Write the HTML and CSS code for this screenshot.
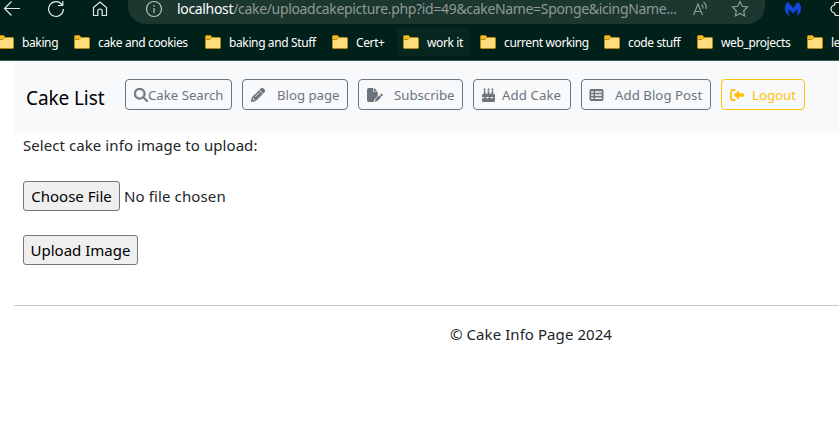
FILE: index.html
```html
<!DOCTYPE html>
<html lang="en">
<head>
<meta charset="utf-8">
<title>Cake Info</title>
<link rel="stylesheet" href="styles.css">
</head>
<body>
<svg class="defs" width="0" height="0">
  <symbol id="folder" viewBox="0 0 16 14">
    <path d="M.5 1.5q0-1 1-1h4l1.5 2h7.500q1 0 1 1v9q0 1-1 1h-13q-1 0-1-1z" fill="#ffdc7c" stroke="#b58a12"/>
    <path d="M1 1h4.500l1 1.500-1.500 1.500h-4z" fill="#f4bd1c"/>
    <path d="M1 4.500h4l2-2" fill="none" stroke="#b58a12"/>
  </symbol>
</svg>
<header class="browser">
  <div class="toolbar">
    <svg class="back" width="18" height="18" viewBox="0 0 18 18"><path d="M17 8.500H1.500M8.500 1.500l-7 7 7 7"/></svg>
    <svg class="reload" width="18" height="18" viewBox="0 0 18 18"><path d="M15.200 5A7.400 7.400 0 1 0 16.400 9M15.800 1v4.500H11"/></svg>
    <svg class="home" width="16" height="18" viewBox="0 0 16 18"><path d="M1.500 7.500L8 2l6.500 5.500V15.500h-4.300v-4.300a2.200 2.200 0 0 0-4.400 0v4.300H1.500z"/></svg>
    <div class="address">
      <svg class="info" width="18" height="18" viewBox="0 0 18 18"><circle cx="9" cy="9" r="7.500"/><path d="M9 8v5M9 5v1.500"/></svg>
      <span class="url"><b>localhost</b>/cake/uploadcakepicture.php?id=49&amp;cakeName=Sponge&amp;icingName...</span>
      <svg class="read" width="17" height="18" viewBox="0 0 17 18"><path d="M1.500 15L6 4l4.500 11M3 11.500h6M9.500 4.500q2 1.500 1.500 4M11.500 2q3.500 3 2.500 7"/></svg>
      <svg class="star" width="18" height="18" viewBox="0 0 18 18"><path d="M9 1.500l2.300 4.800 5.200.700-3.800 3.700.9 5.300L9 13.500 4.400 16l.9-5.300L1.500 7l5.200-.7z"/></svg>
    </div>
    <svg class="malware" width="18" height="16" viewBox="0 0 18 16"><path d="M4 1l5 6 5-6q3.500 3 2.900 7.500Q16.500 13 12.500 15q1.500-3 1-7L9 12.500 4.500 8q-.5 4 1 7Q1.500 13 1.100 8.500.5 4 4 1z"/></svg>
    <svg class="puzzle" width="9" height="18" viewBox="0 0 9 18"><path d="M9 2.500H6.500Q4.500 2.500 4.500 5 1 6 1 9t3.500 4q0 2.500 2 2.500H9"/></svg>
  </div>
  <nav class="bookmarks">
    <a class="mark m1"><svg><use href="#folder"/></svg><span>baking</span></a>
    <a class="mark m2"><svg><use href="#folder"/></svg><span>cake and cookies</span></a>
    <a class="mark m3"><svg><use href="#folder"/></svg><span>baking and Stuff</span></a>
    <a class="mark m4"><svg><use href="#folder"/></svg><span>Cert+</span></a>
    <a class="mark m5"><svg><use href="#folder"/></svg><span>work it</span></a>
    <a class="mark m6"><svg><use href="#folder"/></svg><span>current working</span></a>
    <a class="mark m7"><svg><use href="#folder"/></svg><span>code stuff</span></a>
    <a class="mark m8"><svg><use href="#folder"/></svg><span>web_projects</span></a>
    <a class="mark m9"><svg><use href="#folder"/></svg><span>le</span></a>
  </nav>
</header>
<div class="page">
  <nav class="navbar">
    <a class="brand">Cake List</a>
    <a class="btn search"><svg width="14" height="14" viewBox="0 0 512 512"><path stroke="currentColor" stroke-width="16" d="M416 208c0 45.900-14.900 88.300-40 122.700L502.600 457.400c12.500 12.500 12.500 32.800 0 45.300s-32.800 12.500-45.300 0L330.700 376c-34.400 25.200-76.800 40-122.700 40C93.100 416 0 322.900 0 208S93.100 0 208 0S416 93.100 416 208zM208 352a144 144 0 1 0 0-288 144 144 0 1 0 0 288z"/></svg><span>Cake Search</span></a>
    <a class="btn blog"><svg width="14" height="14" viewBox="0 0 512 512"><path stroke="currentColor" stroke-width="14" d="M410.300 231l11.300-11.300-33.900-33.900-62.100-62.100L291.700 89.800l-11.300 11.300-22.600 22.600L58.600 322.900c-10.400 10.400-18 23.300-22.200 37.400L1 480.700c-2.500 8.400-.2 17.500 6.100 23.700s15.300 8.500 23.700 6.100l120.300-35.400c14.100-4.200 27-11.800 37.400-22.200L387.700 253.700 410.300 231zM160 399.400l-9.100 22.700c-4 3.100-8.500 5.400-13.300 6.900L59.400 452l23-78.100c1.400-4.900 3.800-9.400 6.900-13.300l22.700-9.100v32c0 8.800 7.200 16 16 16h32zM362.700 18.700L348.300 33.200 325.700 55.800 314.300 67.100l33.900 33.900 62.100 62.100 33.900 33.900 11.300-11.300 22.600-22.600 14.500-14.500c25-25 25-65.500 0-90.500L453.300 18.700c-25-25-65.500-25-90.500 0zm-47.400 168l-144 144c-6.200 6.200-16.400 6.200-22.600 0s-6.200-16.400 0-22.600l144-144c6.200-6.200 16.400-6.200 22.600 0s6.200 16.400 0 22.600z"/></svg><span>Blog page</span></a>
    <a class="btn subscribe"><svg width="16" height="14" viewBox="0 0 16 14"><path d="M1.700 0H6.300v3.200q0 .9.900.9h3.600v3.900L7.500 11.200 6.700 14H1.700Q0 14 0 12.300V1.700Q0 0 1.700 0zM7 0l3.800 3.500H7zM13.700 5.900q.6-.6 1.200 0l.7.700q.6.600 0 1.200l-.8.800-1.900-1.900zM12.300 7.300l1.900 1.900-3.800 3.800-2.600.8.700-2.700z"/></svg><span>Subscribe</span></a>
    <a class="btn cake"><svg width="13" height="14" viewBox="0 0 13 14"><path d="M2.600 0q1 1.100 1 1.700a1 1 0 0 1-2 0q0-.6 1-1.700zM6.500 0q1 1.100 1 1.700a1 1 0 0 1-2 0q0-.6 1-1.700zM10.400 0q1 1.100 1 1.700a1 1 0 0 1-2 0q0-.6 1-1.700zM1.700 3.200h1.800v2.600h2.100V3.200h1.800v2.600h2.100V3.200h1.800v2.600q1.800.2 1.800 1.800v1.500l-1.200.6-2.100-1-2.100 1-2.200-1-2.100 1L0 9.100V7.600Q0 5.900 1.700 5.800zM0 10l1.100.5 2.200-1 2.100 1 2.200-1 2.100 1 2.100-1 1.200.5V13q0 1-1 1H1q-1 0-1-1z"/></svg><span>Add Cake</span></a>
    <a class="btn post"><svg width="15" height="14" viewBox="0 0 14 14"><path fill-rule="evenodd" d="M1.700 1h10.600Q14 1 14 2.700v8.600q0 1.700-1.700 1.700H1.700Q0 13 0 11.300V2.700Q0 1 1.700 1zM1.700 3.200v1.500h2.300V3.200zM5.500 3.200v1.500h6.800V3.200zM1.700 6.300v1.500h2.300V6.300zM5.500 6.300v1.500h6.800V6.300zM1.700 9.500v1.500h2.300V9.500zM5.500 9.500v1.500h6.800V9.500z"/></svg><span>Add Blog Post</span></a>
    <a class="btn logout"><svg width="14" height="14" viewBox="0 0 14 14"><path d="M4.500 2H3Q1 2 1 4v6q0 2 2 2h1.500" fill="none" stroke="currentColor" stroke-width="1.800" stroke-linecap="round"/><path d="M4.200 6.500l4-3.800q.8-.5.800.4v2.100h4q1 0 1 .9v1.800q0 .9-1 .9H9v2.100q0 .9-.8.4l-4-3.800q-.5-.5 0-1z"/></svg><span>Logout</span></a>
  </nav>
  <main class="upload">
    <p class="prompt">Select cake info image to upload:</p>
    <div class="file"><button class="control choose">Choose File</button><span class="status">No file chosen</span></div>
    <button class="control submit">Upload Image</button>
  </main>
  <footer class="footer">© Cake Info Page 2024</footer>
</div>
</body>
</html>
```
FILE: styles.css
```css
* { box-sizing: border-box; }
body {
  margin: 0;
  height: 434px;
  overflow: hidden;
  background: #fff;
  color: #212529;
  font-family: "Noto Sans", sans-serif;
  font-size: 15px;
}
svg { flex: none; display: block; }
.defs { position: absolute; }
.browser {
  height: 61px;
  background: #02201a;
  border-bottom: 1px solid #3a5a52;
  overflow: hidden;
}
.toolbar {
  display: flex;
  height: 24px;
  align-items: flex-start;
  padding-left: 3px;
}
.toolbar svg { fill: none; stroke: #e4e9e7; stroke-width: 1.2; }
.reload { margin-left: 26px; }
.home { margin-left: 27px; }
.address {
  display: flex;
  align-items: flex-start;
  width: 637px;
  height: 24px;
  margin-left: 20px;
  padding-left: 17px;
  background: #1c3630;
  border-radius: 0 0 18px 18px;
}
.address .info { stroke: #b9c3c0; }
.url {
  flex: none;
  width: 515px;
  margin-left: 14px;
  line-height: 18px;
  font-size: 14px;
  letter-spacing: -0.33px;
  white-space: nowrap;
  color: #8f9b97;
}
.url b { color: #fff; font-weight: 400; }
.toolbar .read, .toolbar .star { stroke: #8f9b97; }
.star { margin-left: 22px; }
.toolbar .malware { margin: 1px 0 0 19px; fill: #1447dc; stroke: none; }
.puzzle { margin-left: 28px; }
.bookmarks {
  display: flex;
  height: 28px;
  margin: 4px 0 0 -8px;
  font-size: 12px;
  letter-spacing: -0.38px;
  color: #fff;
}
.mark {
  display: flex;
  flex: none;
  align-items: center;
  gap: 8px;
  padding-left: 6px;
  white-space: nowrap;
}
.mark svg { width: 16px; height: 14px; }
.m1 { width: 76px; }
.m2 { width: 131px; }
.m3 { width: 127px; }
.m4 { width: 71px; }
.m5 { width: 73px; margin-right: 4px; background: #07261f; border-radius: 3px; }
.m6 { width: 124px; }
.m7 { width: 93px; }
.m8 { width: 110px; }
.page { margin-left: 14px; }
.navbar {
  display: flex;
  height: 72px;
  padding: 18px 0 0 12px;
  gap: 10px;
  background: #f8f9fb;
}
.brand {
  width: 89px;
  line-height: 38px;
  font-size: 19px;
  letter-spacing: -0.1px;
  color: #000;
  white-space: nowrap;
}
.btn {
  display: flex;
  align-items: center;
  height: 31px;
  padding-left: 8px;
  border: 1px solid #6c757d;
  border-radius: 4px;
  color: #6c757d;
  font-size: 13.2px;
  white-space: nowrap;
}
.btn svg { fill: currentColor; }
.search { width: 107px; }
.blog { width: 106px; gap: 12px; }
.subscribe { width: 105px; gap: 11px; }
.cake { width: 98px; gap: 7px; letter-spacing: 0.1px; }
.post { width: 130px; gap: 11px; padding-left: 7px; letter-spacing: 0.05px; }
.logout { width: 84px; gap: 8px; border-color: #ffc107; color: #ffc107; }
.upload { padding-left: 9px; height: 172px; letter-spacing: 0.07px; }
.prompt { margin: 0; line-height: 24px; }
.file { display: flex; margin: 24px 0; gap: 4px; align-items: center; }
.status { letter-spacing: 0.12px; }
.control {
  display: block;
  height: 30px;
  padding: 0;
  border: 1px solid #767676;
  border-radius: 3px;
  background: #efefef;
  color: #000;
  font: inherit;
  white-space: nowrap;
}
.choose { width: 97px; }
.submit { width: 115px; }
.footer {
  border-top: 1px solid #c8c9ca;
  padding: 16px 0 0 436px;
  line-height: 24px;
  letter-spacing: 0.07px;
  white-space: nowrap;
}
```
